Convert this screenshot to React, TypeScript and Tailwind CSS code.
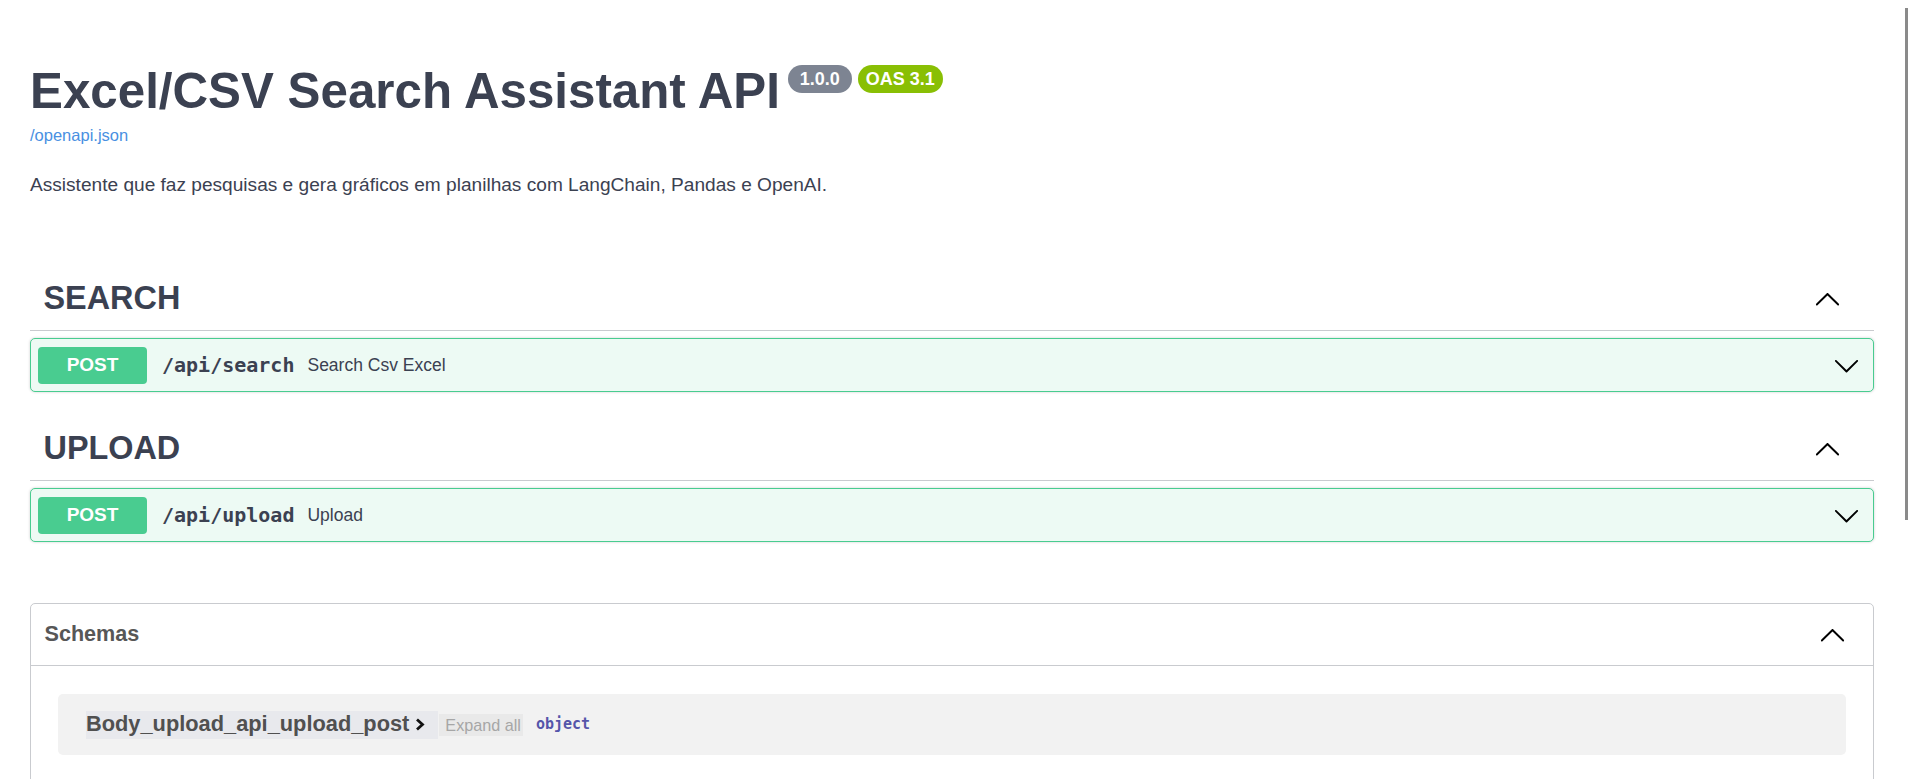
const sections = [
  { tag: "SEARCH", method: "POST", path: "/api/search", summary: "Search Csv Excel" },
  { tag: "UPLOAD", method: "POST", path: "/api/upload", summary: "Upload" },
];

const ARROW_UP =
  "M17.418 14.908c.272.268.709.268.979 0s.27-.701 0-.969l-7.908-7.83c-.27-.268-.707-.268-.979 0l-7.908 7.83c-.27.268-.27.701 0 .969.271.268.709.268.979 0L10 7.767l7.418 7.141z";
const ARROW_DOWN =
  "M17.418 6.109c.272-.268.709-.268.979 0s.271.701 0 .969l-7.908 7.83c-.27.268-.707.268-.979 0l-7.908-7.83c-.27-.268-.27-.701 0-.969.271-.268.709-.268.979 0L10 13.25l7.418-7.141z";

function Arrow({ d }: { d: string }) {
  return (
    <svg width="27" height="27" viewBox="0 0 20 20" className="shrink-0">
      <path d={d} fill="#000" />
    </svg>
  );
}

export default function App() {
  return (
    <div className="relative h-screen overflow-hidden bg-white font-['Liberation_Sans',Arial,sans-serif] text-[#3b4151]">
      {/* overlay scrollbar thumb */}
      <div className="absolute right-[3px] top-[8px] h-[512px] w-[3px] bg-[#8a8a8a]" />

      <div className="pl-[30px] pr-[37px]">
        {/* Info */}
        <div className="pt-[61px]">
          <div className="flex items-start">
            <h2 className="text-[49.3px] font-bold leading-[1.2]">Excel/CSV Search Assistant API</h2>
            <span className="ml-[8px] mt-[4px] flex h-[28px] w-[64px] items-center justify-center rounded-full bg-[#7d8492] text-[18px] font-bold text-white">
              1.0.0
            </span>
            <span className="ml-[6px] mt-[4px] flex h-[28px] w-[85px] items-center justify-center rounded-full bg-[#89bf04] text-[18px] font-bold text-white">
              OAS 3.1
            </span>
          </div>
          <a className="mt-[6px] block w-fit text-[16.5px] leading-[19px] text-[#4990e2]">/openapi.json</a>
          <p className="mt-[29px] text-[19.1px] leading-[22px]">
            Assistente que faz pesquisas e gera gráficos em planilhas com LangChain, Pandas e OpenAI.
          </p>
        </div>

        {/* Operations */}
        <div className="mt-[70px] flex flex-col gap-[24px]">
          {sections.map((s) => (
            <div key={s.tag}>
              <div className="flex items-center justify-between border-b border-[#c9cbcf] py-[13.5px] pl-[13.5px] pr-[33.5px]">
                <h3 className="text-[32.4px] font-bold leading-[37px]">{s.tag}</h3>
                <Arrow d={ARROW_UP} />
              </div>
              <div className="mt-[7px] flex items-center rounded-[5px] border border-[#49cc90] bg-[#edfaf4] py-[7.5px] pl-[7px] pr-[13px] shadow-[0_0_3px_rgba(0,0,0,0.19)]">
                <span className="flex h-[37px] w-[109px] items-center justify-center rounded-[4px] bg-[#49cc90] text-[19px] font-bold text-white">
                  {s.method}
                </span>
                <span className="ml-[15px] font-['DejaVu_Sans_Mono',monospace] text-[20px] font-bold">{s.path}</span>
                <span className="ml-[13px] text-[17.5px]">{s.summary}</span>
                <span className="flex-1" />
                <Arrow d={ARROW_DOWN} />
              </div>
            </div>
          ))}
        </div>

        {/* Schemas */}
        <div className="mt-[61px] rounded-[5px] border border-[#c9cbcf]">
          <div className="flex h-[62px] items-center justify-between border-b border-[#c9cbcf] pl-[13.5px] pr-[27px]">
            <h4 className="text-[21.6px] font-bold text-[#575757]">Schemas</h4>
            <Arrow d={ARROW_UP} />
          </div>
          <div className="px-[27px] pb-[30px] pt-[28px]">
            <div className="flex h-[61px] items-center rounded-[5px] bg-[#f2f2f2] pl-[28px]">
              <span className="flex h-[28px] items-center bg-[#e8e9ed] pr-[13px] text-[21.8px] font-bold text-[#505050]">
                Body_upload_api_upload_post
                <svg width="10" height="13" viewBox="0 0 10 13" className="ml-[6px]">
                  <path d="M2 1.5 L7.5 6.5 L2 11.5" fill="none" stroke="#111" strokeWidth="2.8" />
                </svg>
              </span>
              <span className="ml-[1px] flex h-[22px] items-center bg-[#e9e9e9] pl-[6px] pr-[2px] text-[16.2px] text-[#a6a6a6]">
                Expand all
              </span>
              <span className="ml-[13px] font-['DejaVu_Sans_Mono',monospace] text-[15px] font-bold text-[#5555aa]">
                object
              </span>
            </div>
          </div>
        </div>
      </div>
    </div>
  );
}
